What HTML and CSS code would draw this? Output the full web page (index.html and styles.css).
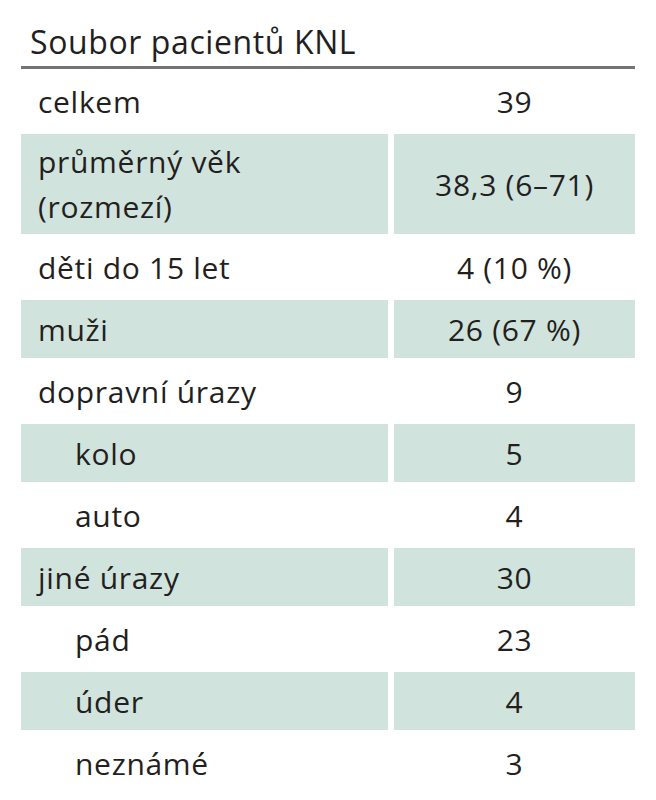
FILE: index.html
```html
<!DOCTYPE html>
<html lang="cs">
<head>
<meta charset="utf-8">
<title>Soubor pacientů KNL</title>
<link rel="stylesheet" href="styles.css">
</head>
<body>
<div class="wrap">
  <div class="title">Soubor pacientů KNL</div>
  <div class="rule"></div>
  <div class="grid">
    <div class="cell label">celkem</div><div class="cell val">39</div>
    <div class="cell label shade tall">průměrný věk<br>(rozmezí)</div><div class="cell val shade tall">38,3 (6–71)</div>
    <div class="cell label">děti do 15 let</div><div class="cell val">4 (10 %)</div>
    <div class="cell label shade">muži</div><div class="cell val shade">26 (67 %)</div>
    <div class="cell label">dopravní úrazy</div><div class="cell val">9</div>
    <div class="cell label shade sub">kolo</div><div class="cell val shade">5</div>
    <div class="cell label sub">auto</div><div class="cell val">4</div>
    <div class="cell label shade">jiné úrazy</div><div class="cell val shade">30</div>
    <div class="cell label sub">pád</div><div class="cell val">23</div>
    <div class="cell label shade sub">úder</div><div class="cell val shade">4</div>
    <div class="cell label sub">neznámé</div><div class="cell val">3</div>
  </div>
</div>
</body>
</html>
```

FILE: styles.css
```css
html, body {
  margin: 0;
  padding: 0;
  background: #ffffff;
}
body {
  font-family: "Open Sans", "Noto Sans", sans-serif;
  color: #231f20;
}
.wrap {
  margin-left: 21px;
  width: 614px;
}
.title {
  padding: 18px 0 0 9px;
  height: 48px;
  font-size: 32px;
  line-height: 48px;
  letter-spacing: 0.6px;
}
.rule {
  height: 3px;
  background: #747474;
}
.grid {
  display: grid;
  grid-template-columns: 367px 241px;
  column-gap: 6px;
  row-gap: 4px;
  margin-top: 3px;
}
.cell {
  height: 58px;
  display: flex;
  align-items: center;
  font-size: 30px;
  letter-spacing: 0.7px;
  line-height: 45px;
}
.cell.tall {
  height: 100px;
}
.label {
  padding-left: 17px;
}
.label.sub {
  padding-left: 54px;
}
.val {
  justify-content: center;
}
.shade {
  background: #d1e3dd;
}
```
